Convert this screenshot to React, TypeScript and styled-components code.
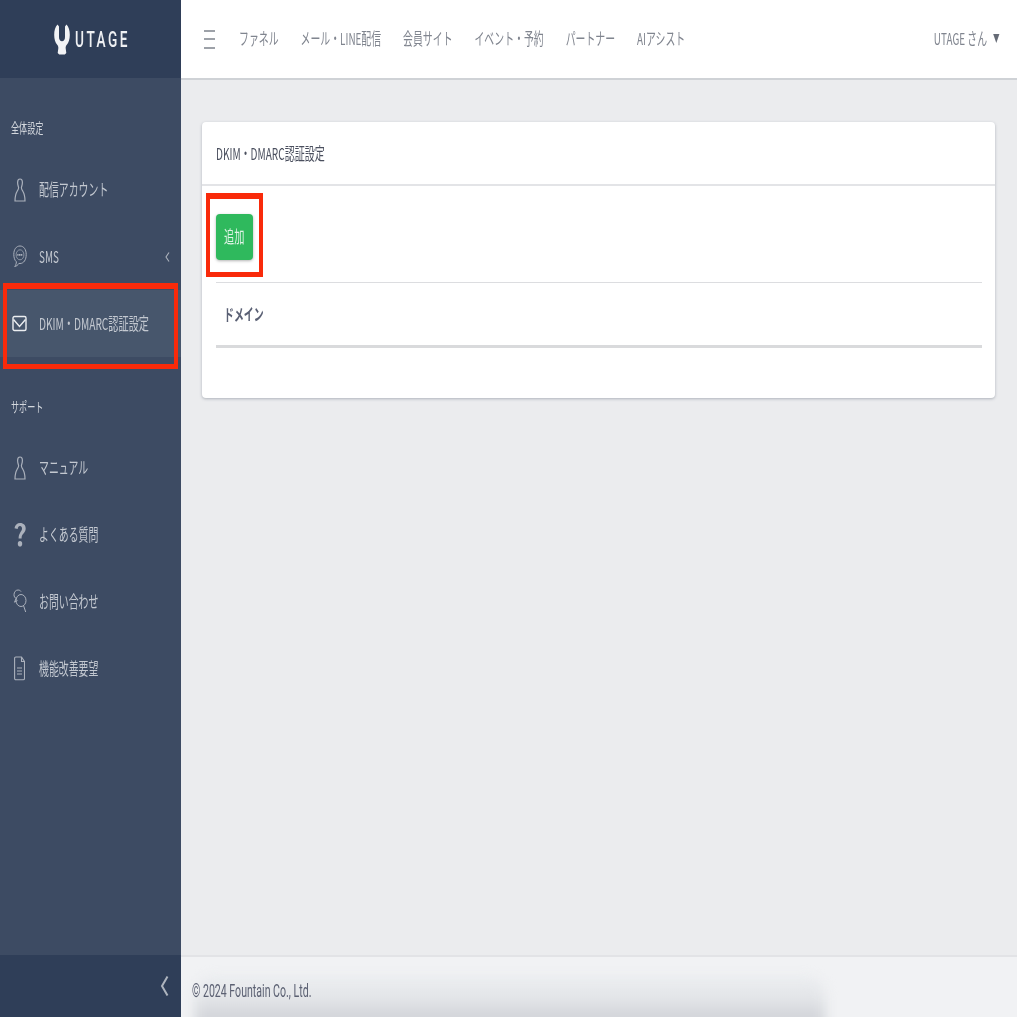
import React from "react";
import styled, { createGlobalStyle } from "styled-components";

const GlobalStyle = createGlobalStyle`
  html, body { margin: 0; padding: 0; height: 100%; overflow: hidden; }
  body { font-family: "Noto Sans CJK JP", Roboto, "Noto Sans", sans-serif; background: #ebecee; }
  #root { height: 100%; }
`;

// the reference is a soft, upscaled capture, so everything gets a slight blur
const Shell = styled.div`
  display: grid;
  grid-template-columns: 181px 1fr;
  height: 1017px;
  width: 1017px;
  filter: blur(0.5px);
`;

const Sidebar = styled.aside`
  display: flex;
  flex-direction: column;
  background: #3d4b63;
  color: #c3c8d0;
  height: 1017px;
`;

const Brand = styled.div`
  height: 78px;
  flex: none;
  background: #2f3e58;
  display: flex;
  align-items: center;
  padding-left: 54px;
  gap: 5px;
`;

const BrandName = styled.span`
  font-family: Roboto, sans-serif;
  font-weight: 500;
  font-size: 22px;
  letter-spacing: 4px;
  color: #eef0f3;
  display: inline-block;
  white-space: nowrap;
  transform: scaleX(0.62);
  transform-origin: left center;
`;

const SideNav = styled.nav`
  flex: 1;
  display: flex;
  flex-direction: column;
`;

const SectionTitle = styled.div<{ $height: number }>`
  height: ${(p) => p.$height}px;
  box-sizing: border-box;
  padding: 35px 11px 0;
  line-height: 28px;
  font-size: 13.5px;
  color: #d3d7dd;
  white-space: nowrap;
`;

const Squeezed = styled.span<{ $x?: number }>`
  display: inline-block;
  white-space: nowrap;
  transform: scaleX(${(p) => p.$x ?? 0.6});
  transform-origin: left center;
`;

const SideItem = styled.div<{ $active?: boolean }>`
  position: relative;
  height: 67px;
  flex: none;
  display: flex;
  align-items: center;
  background: ${(p) => (p.$active ? "#47566c" : "transparent")};
  font-size: 16.5px;
  line-height: 24px;
  padding-bottom: 2px;
  box-sizing: border-box;
`;

const IconCell = styled.span`
  width: 39px;
  flex: none;
  display: flex;
  justify-content: center;
  color: #abb1bc;
  margin-top: 2px;
`;

const ItemArrow = styled.span`
  position: absolute;
  right: 11px;
  top: 50%;
  margin-top: -6px;
  display: flex;
  color: #aeb4be;
`;

const RedFrame = styled.span<{ $top: number; $bottom: number; $side: number }>`
  position: absolute;
  left: ${(p) => p.$side}px;
  right: ${(p) => p.$side}px;
  top: ${(p) => p.$top}px;
  bottom: ${(p) => p.$bottom}px;
  border: solid #f92a0a;
  border-width: 6px 4px 5px 4px;
  pointer-events: none;
`;

const Collapse = styled.div`
  height: 62px;
  flex: none;
  background: #2f3e58;
  display: flex;
  align-items: center;
  justify-content: flex-end;
  padding-right: 12px;
  color: #aeb4be;
`;

const Main = styled.div`
  display: flex;
  flex-direction: column;
  min-width: 0;
  height: 1017px;
`;

const TopBar = styled.header`
  height: 80px;
  box-sizing: border-box;
  flex: none;
  background: #fff;
  border-bottom: 2px solid #cfd2d6;
  display: flex;
  align-items: center;
  position: relative;
  padding-left: 23px;
  padding-bottom: 2px;
`;

const Burger = styled.span`
  display: flex;
  color: #7d828c;
  margin-top: 3px;
`;

const TopNav = styled.nav`
  display: flex;
  gap: 36.5px;
  margin-left: 24px;
  font-size: 16.5px;
  color: #80858f;
  white-space: nowrap;
  transform: scaleX(0.6);
  transform-origin: left center;
`;

const UserMenu = styled.div`
  position: absolute;
  right: 17px;
  top: 27px;
  display: flex;
  align-items: center;
  gap: 10px;
  font-size: 16.5px;
  line-height: 22px;
  color: #80858f;
  white-space: nowrap;
  transform: scaleX(0.6);
  transform-origin: right center;
`;

const Caret = styled.span`
  font-size: 11px;
  color: #666b76;
`;

const Content = styled.main`
  flex: 1;
  background: #ebecee;
  padding: 42px 22px 0 21px;
`;

const Card = styled.section`
  background: #fff;
  border-radius: 4px;
  box-shadow: 0 1px 3px rgba(60, 70, 90, 0.35);
  height: 276px;
  box-sizing: border-box;
`;

const CardHeader = styled.div`
  height: 64px;
  box-sizing: border-box;
  border-bottom: 2px solid #e3e4e7;
  display: flex;
  align-items: center;
  padding: 0 0 1px 14px;
  font-size: 16.5px;
  color: #4a4f5e;
`;

const CardBody = styled.div`
  padding: 28px 13px 0 14px;
`;

const AddRow = styled.div`
  height: 68px;
  border-bottom: 1px solid #dcdde0;
`;

const AddButton = styled.button`
  position: relative;
  width: 37px;
  height: 46px;
  padding: 0 0 3px 8px;
  border: none;
  border-radius: 4px;
  background: #2fb95d;
  color: #dff3e6;
  font-family: inherit;
  font-size: 17px;
  box-shadow: 0 1px 3px rgba(0, 0, 0, 0.3);
  display: flex;
  align-items: center;
`;

const TableHead = styled.div`
  height: 65px;
  box-sizing: border-box;
  border-bottom: 3px solid #d9dadc;
  display: flex;
  align-items: center;
  padding: 0 0 1px 8px;
  font-size: 16.5px;
  font-weight: 700;
  color: #5a6074;
`;

const Footer = styled.footer`
  position: relative;
  overflow: hidden;
  height: 62px;
  box-sizing: border-box;
  flex: none;
  background: #f1f2f4;
  border-top: 2px solid #e2e3e6;
  display: flex;
  align-items: center;
  padding-left: 11px;
  font-family: Roboto, sans-serif;
  font-size: 17.5px;
  color: #5b6072;
`;

/* the soft grey smudge sitting over the bottom of the footer */
const FooterSmudge = styled.span`
  position: absolute;
  left: 14px;
  right: 192px;
  top: 20px;
  height: 70px;
  background: linear-gradient(#eaecef 0%, #e4e6e9 30%, #d3d5da 55%);
  filter: blur(6px);
  border-radius: 18px;
`;

const FooterText = styled(Squeezed)`
  position: relative;
  top: 4px;
`;

const PersonIcon = () => (
  <svg width="12" height="24" viewBox="0 0 12 24" fill="none" stroke="currentColor" strokeWidth="1.2">
    <path d="M6 1C4.400 1 3.600 2.400 3.600 4.400c0 2.300.7 3.900 1 5.200.2 1.100-.4 2-1.300 3.400-1.200 1.900-2.300 4.500-2.300 10h10c0-5.500-1.100-8.100-2.300-10-.9-1.400-1.500-2.300-1.300-3.400.3-1.300 1-2.900 1-5.200C8.400 2.400 7.600 1 6 1z" />
  </svg>
);

const SmsIcon = () => (
  <svg width="14" height="23" viewBox="0 0 14 23" fill="none" stroke="currentColor" strokeWidth="1">
    <path d="M7 1C3.300 1 .8 4.300.8 9.300c0 3.300.9 6 2.600 7.500-.1 1.700-.5 3.300-1.700 4.700 1.800-.3 3.200-1.400 4.200-3.100.3.100.7.100 1.100.100 3.700 0 6.200-3.700 6.200-8.900C13.200 4.300 10.700 1 7 1z" />
    <ellipse cx="7" cy="9.800" rx="3.900" ry="5" strokeWidth="0.7" />
    <path d="M4.300 9.800h5.400" strokeWidth="1.700" strokeDasharray="1.300 .4" />
  </svg>
);

const CheckBoxIcon = () => (
  <svg width="15" height="17" viewBox="0 0 15 17" fill="none" stroke="#eceef1" strokeWidth="1.4">
    <rect x="1" y="1.500" width="13" height="14" rx="1.500" />
    <path d="M1.500 4.500l6 7 6-7" />
  </svg>
);

const QuestionIcon = () => (
  <svg width="12" height="25" viewBox="0 0 12 25" fill="currentColor">
    <path d="M6.200 1C3 1 1 3 .5 6.300l3.200.6c.2-1.900 1-3 2.300-3 1.200 0 2 .9 2 2.500 0 1.300-.5 2.200-1.500 3.500C5.200 12.300 4.600 13.600 4.600 16.500h3c0-2.300.4-3.100 1.700-4.700 1.500-1.700 2.400-3.100 2.400-5.200C11.700 3.200 9.500 1 6.200 1z" />
    <ellipse cx="6" cy="21.800" rx="2.200" ry="2.800" />
  </svg>
);

const ChatSearchIcon = () => (
  <svg width="14" height="25" viewBox="0 0 14 25" fill="none" stroke="currentColor" strokeWidth="1">
    <path d="M3.500 9.500C1.800 9 1 7.500 1 5.800 1 3 2.700 1 5 1c1.300 0 2.400.5 3 1.500" />
    <path d="M3.200 9.300L1.500 13.200l3-1.800" />
    <ellipse cx="8" cy="11.500" rx="5" ry="6" />
    <path d="M10.500 16.500l2.200 6.500" />
  </svg>
);

const DocIcon = () => (
  <svg width="11" height="25" viewBox="0 0 11 25" fill="none" stroke="currentColor" strokeWidth="1.1">
    <path d="M1.800 1h5.700l3 4.500v17a1.200 1.200 0 0 1-1.200 1.200H1.800A1.200 1.200 0 0 1 .6 22.500V2.200A1.200 1.200 0 0 1 1.800 1z" />
    <path d="M7.500 1v4.500h3M3 12h5M3 15h5M3 18h5" />
  </svg>
);

const SmallChevron = () => (
  <svg width="5" height="12" viewBox="0 0 5 12" fill="none" stroke="currentColor" strokeWidth="1.1">
    <path d="M4 1.500L1 6l3 4.500" />
  </svg>
);

const Logo = () => (
  <svg width="16" height="31" viewBox="0 0 16 31" fill="#f2f3f5">
    <path d="M3.500.5L5 2.500V13c0 2.600 1.100 4.200 3 4.200s3-1.600 3-4.200V2.500L12.500.5C14.800 3 15.800 6.500 15.800 11c0 4.500-1.200 7.600-3 9.700-.9 1.100-1.300 2.300-1.100 3.800l.6 4.500-1.500 1.500H5.200l-1.500-1.500.6-4.500c.2-1.500-.2-2.700-1.100-3.800C1.400 18.600.2 15.500.2 11 .2 6.500 1.200 3 3.500.5z" />
  </svg>
);

type SideEntry = { label: string; icon: React.ReactNode; active?: boolean; arrow?: boolean };

const settings: SideEntry[] = [
  { label: "配信アカウント", icon: <PersonIcon /> },
  { label: "SMS", icon: <SmsIcon />, arrow: true },
  { label: "DKIM・DMARC認証設定", icon: <CheckBoxIcon />, active: true },
];

const support: SideEntry[] = [
  { label: "マニュアル", icon: <PersonIcon /> },
  { label: "よくある質問", icon: <QuestionIcon /> },
  { label: "お問い合わせ", icon: <ChatSearchIcon /> },
  { label: "機能改善要望", icon: <DocIcon /> },
];

const topLinks = ["ファネル", "メール・LINE配信", "会員サイト", "イベント・予約", "パートナー", "AIアシスト"];

const renderItem = (item: SideEntry) => (
  <SideItem key={item.label} $active={item.active}>
    <IconCell>{item.icon}</IconCell>
    <Squeezed $x={item.active ? 0.616 : 0.6}>{item.label}</Squeezed>
    {item.arrow && (
      <ItemArrow>
        <SmallChevron />
      </ItemArrow>
    )}
    {item.active && <RedFrame $top={-7} $bottom={-12} $side={3} />}
  </SideItem>
);

export default function App() {
  return (
    <>
      <GlobalStyle />
      <Shell>
        <Sidebar>
          <Brand>
            <Logo />
            <BrandName>UTAGE</BrandName>
          </Brand>
          <SideNav>
            <SectionTitle $height={78}>
              <Squeezed $x={0.6}>全体設定</Squeezed>
            </SectionTitle>
            {settings.map(renderItem)}
            <SectionTitle $height={77}>
              <Squeezed $x={0.6}>サポート</Squeezed>
            </SectionTitle>
            {support.map(renderItem)}
          </SideNav>
          <Collapse>
            <svg width="9" height="22" viewBox="0 0 9 22" fill="none" stroke="currentColor" strokeWidth="2">
              <path d="M7.500 1.500L2 11l5.500 9.500" />
            </svg>
          </Collapse>
        </Sidebar>
        <Main>
          <TopBar>
            <Burger>
              <svg width="11" height="19" viewBox="0 0 11 19" stroke="currentColor" strokeWidth="1.3">
                <path d="M0 1h11M0 9h11M0 18h11" />
              </svg>
            </Burger>
            <TopNav>
              {topLinks.map((link) => (
                <span key={link}>{link}</span>
              ))}
            </TopNav>
            <UserMenu>
              <span>UTAGE さん</span>
              <Caret>▼</Caret>
            </UserMenu>
          </TopBar>
          <Content>
            <Card>
              <CardHeader>
                <Squeezed $x={0.61}>DKIM・DMARC認証設定</Squeezed>
              </CardHeader>
              <CardBody>
                <AddRow>
                  <AddButton>
                    <Squeezed $x={0.6}>追加</Squeezed>
                    <RedFrame $top={-21} $bottom={-17} $side={-10} />
                  </AddButton>
                </AddRow>
                <TableHead>
                  <Squeezed $x={0.6}>ドメイン</Squeezed>
                </TableHead>
              </CardBody>
            </Card>
          </Content>
          <Footer>
            <FooterSmudge />
            <FooterText $x={0.605}>© 2024 Fountain Co., Ltd.</FooterText>
          </Footer>
        </Main>
      </Shell>
    </>
  );
}
